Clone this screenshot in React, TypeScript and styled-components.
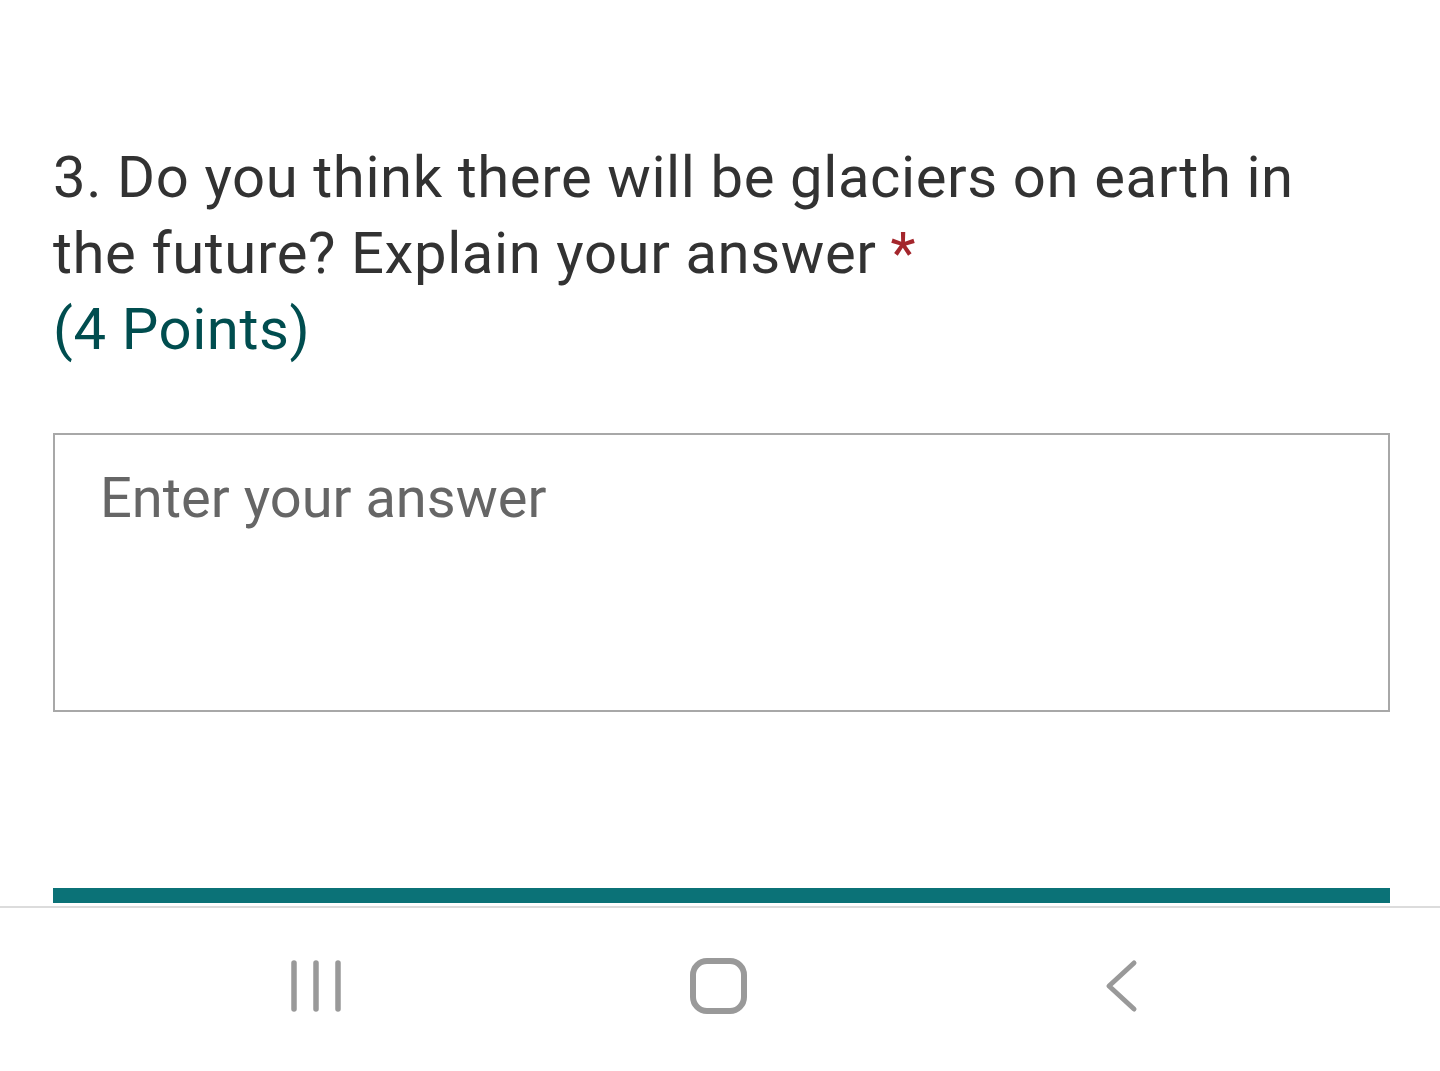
import React from "react";
import styled, { createGlobalStyle } from "styled-components";

const Global = createGlobalStyle`
  html, body { margin: 0; padding: 0; background: #ffffff; }
  body { font-family: Roboto, "Noto Sans", Arial, sans-serif; }
`;

const Screen = styled.div`
  width: 1440px;
  height: 1071px;
  display: flex;
  flex-direction: column;
  background: #fff;
  overflow: hidden;
`;

const Content = styled.main`
  flex: 1;
  display: flex;
  flex-direction: column;
  padding: 139px 50px 0 53px;
`;

const Question = styled.div`
  max-width: 1300px;
  font-size: 58px;
  line-height: 76px;
  color: #323232;
  letter-spacing: 0.6px;
`;

const Required = styled.span`
  color: #a4262c;
  margin-left: 14px;
`;

const Points = styled.div`
  font-size: 58px;
  line-height: 76px;
  color: #004d4f;
  letter-spacing: 0.6px;
`;

const AnswerBox = styled.div`
  margin-top: 66px;
  height: 279px;
  box-sizing: border-box;
  border: 2px solid #a8a8a8;
  padding: 30px 45px;
  font-size: 56px;
  line-height: 1.2;
  color: #666666;
`;

const ProgressBar = styled.div`
  margin-top: 176px;
  height: 15px;
  background: #0b7277;
`;

const NavBar = styled.nav`
  height: 165px;
  border-top: 2px solid #dcdcdc;
  display: grid;
  grid-template-columns: repeat(3, 1fr);
  align-items: center;
  padding-bottom: 8px;
  box-sizing: border-box;
`;

const NavSlot = styled.div<{ $offset: number }>`
  display: flex;
  justify-content: center;
  transform: translateX(${(p) => p.$offset}px);
`;

const Recents = () => (
  <svg width="56" height="54" viewBox="0 0 56 54">
    <g stroke="#999" strokeWidth="5.5" strokeLinecap="round">
      <line x1="6" y1="4" x2="6" y2="50" />
      <line x1="28" y1="4" x2="28" y2="50" />
      <line x1="50" y1="4" x2="50" y2="50" />
    </g>
  </svg>
);

const Home = () => (
  <svg width="58" height="56" viewBox="0 0 58 56">
    <rect x="3" y="3" width="51" height="50" rx="14" fill="none" stroke="#999" strokeWidth="6" />
  </svg>
);

const Back = () => (
  <svg width="36" height="54" viewBox="0 0 36 54">
    <polyline points="30,4 5,27 30,50" fill="none" stroke="#999" strokeWidth="5" strokeLinecap="round" strokeLinejoin="round" />
  </svg>
);

export default function App() {
  return (
    <>
      <Global />
      <Screen>
        <Content>
          <Question>
            3. Do you think there will be glaciers on earth in the future? Explain your answer
            <Required>*</Required>
          </Question>
          <Points>(4 Points)</Points>
          <AnswerBox>Enter your answer</AnswerBox>
          <ProgressBar />
        </Content>
        <NavBar>
          <NavSlot $offset={76}><Recents /></NavSlot>
          <NavSlot $offset={-1}><Home /></NavSlot>
          <NavSlot $offset={-78}><Back /></NavSlot>
        </NavBar>
      </Screen>
    </>
  );
}
